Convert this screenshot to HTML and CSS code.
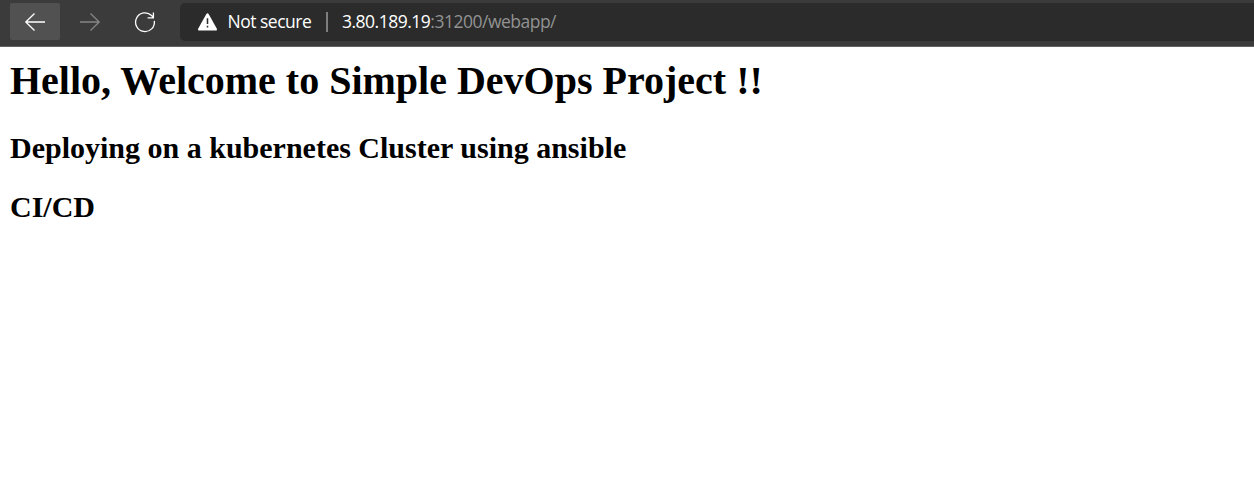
FILE: index.html
```html
<!DOCTYPE html>
<html lang="en">
<head>
<meta charset="utf-8">
<title>Simple DevOps Project</title>
<link rel="stylesheet" href="styles.css">
</head>
<body>
<header class="toolbar">
  <nav class="nav">
    <button class="nav-button active" aria-label="Back">
      <svg class="icon" viewBox="0 0 24 24"><path d="M22 12H2.5M11.5 3.5L2.8 12l8.7 8.5"/></svg>
    </button>
    <button class="nav-button disabled" aria-label="Forward">
      <svg class="icon" viewBox="0 0 24 24"><path d="M2 12h19.5M12.5 3.5l8.7 8.5-8.7 8.5"/></svg>
    </button>
    <button class="nav-button" aria-label="Refresh">
      <svg class="icon" viewBox="0 0 24 24"><path d="M21.3 10.8A9.4 9.4 0 1 1 18.6 5.5L20.4 7.6M20.4 2.5v5.3h-5.8"/></svg>
    </button>
  </nav>
  <div class="address">
    <svg class="warning" viewBox="0 0 22 20"><path class="warning-shape" d="M9.8 1.6Q11 .2 12.2 1.6L20.8 17Q21.6 19 19.8 19H2.2Q.4 19 1.2 17Z"/><path class="warning-mark" d="M11 6v6.2M11 13.8v2"/></svg>
    <span class="security">Not secure</span>
    <span class="divider"></span>
    <span class="url"><span class="host">3.80.189.19</span><span class="path">:31200/webapp/</span></span>
  </div>
</header>
<main class="page">
  <h1 class="title">Hello, Welcome to Simple DevOps Project !!</h1>
  <h2 class="subtitle">Deploying on a kubernetes Cluster using ansible</h2>
  <h2 class="subtitle">CI/CD</h2>
</main>
</body>
</html>
```
FILE: styles.css
```css
body {
  margin: 0;
  background: #fff;
  color: #000;
  font-family: "Liberation Serif", serif;
  overflow: hidden;
}
.toolbar {
  box-sizing: border-box;
  display: flex;
  height: 47px;
  padding: 3px 0 0 10px;
  background: #3b3b3b;
  border-bottom: 1px solid #626262;
}
.nav {
  display: flex;
  gap: 5px;
}
.nav-button {
  display: flex;
  align-items: center;
  justify-content: center;
  width: 50px;
  height: 37px;
  padding: 0;
  border: 0;
  border-radius: 2px;
  background: transparent;
  color: #fff;
}
.active { background: #515151; }
.disabled { color: #858585; }
.icon {
  width: 24px;
  height: 24px;
  fill: none;
  stroke: currentColor;
  stroke-width: 1.3;
}
.address {
  display: flex;
  flex: 1;
  align-items: center;
  height: 38px;
  margin-left: 10px;
  padding-left: 17px;
  border-radius: 5px 0 0 5px;
  background: #2b2b2b;
  color: #fff;
  font: 17.5px/24px "Open Sans", sans-serif;
  white-space: nowrap;
  box-sizing: border-box;
}
.warning {
  width: 21px;
  height: 20px;
}
.warning-shape { fill: #fff; }
.warning-mark {
  fill: none;
  stroke: #2b2b2b;
  stroke-width: 1.6;
}
.security {
  width: 84.5px;
  margin-left: 9.5px;
  padding-bottom: 2px;
  letter-spacing: -0.5px;
}
.divider {
  width: 2px;
  height: 20px;
  margin: 0 14px;
  background: #7e7e7e;
}
.url {
  padding-bottom: 2px;
  letter-spacing: -0.5px;
}
.path { color: #929292; }
.page { padding: 11px 10px 0; }
.title {
  margin: 0 0 28px;
  font-size: 40px;
  line-height: 45px;
}
.subtitle {
  margin: 0 0 25px;
  font-size: 30px;
  line-height: 34px;
}
```
